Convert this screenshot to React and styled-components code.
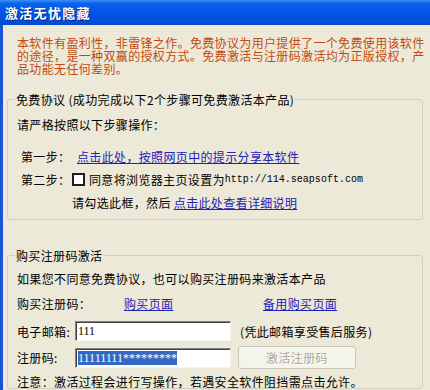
import React from 'react';
import styled, { createGlobalStyle } from 'styled-components';

const GlobalStyle = createGlobalStyle`
  body {
    margin: 0;
    background: #ECE9D8;
  }
`;

const Window = styled.div`
  width: 430px;
  height: 390px;
  overflow: hidden;
  display: flex;
  flex-direction: column;
  background: #ECE9D8;
  font-family: "Noto Sans CJK SC", "Noto Sans", sans-serif;
  font-size: 12px;
  line-height: 13px;
  letter-spacing: 0.35px;
  color: #000;
`;

const TitleBar = styled.div`
  height: 25px;
  flex: none;
  display: flex;
  align-items: center;
  padding-left: 5px;
  background: linear-gradient(to bottom, #3C8EF9 0%, #0B62EA 14%, #0055E5 50%, #0050DC 85%, #0747C6 100%);
  color: #fff;
  font-weight: bold;
  font-size: 13px;
  letter-spacing: 1.3px;
  text-shadow: 1px 1px 0 #0A2A8A;
`;

const Body = styled.div`
  flex: 1;
  display: flex;
  flex-direction: column;
  border-left: 3px solid #1B52D6;
  padding: 11px 7px 0 4px;
`;

const Notice = styled.p`
  margin: 0 0 18px 10px;
  color: #C24A10;
  white-space: nowrap;
`;

const Group = styled.fieldset`
  margin: ${p => p.$top || 0}px 0 0;
  padding: 0 10px ${p => p.$bottom || 0}px 9px;
  border: 1px solid #D0D0BF;
  border-radius: 3px;
  min-width: 0;
`;

const Legend = styled.legend`
  padding: 0 1px;
  margin-left: -2px;
  line-height: 13px;
`;

const Line = styled.div`
  display: flex;
  align-items: center;
  white-space: nowrap;
  margin-top: ${p => p.$mt || 0}px;
  padding-left: ${p => p.$indent || 0}px;
  height: ${p => p.$h || 13}px;
`;

const Label = styled.span`
  width: ${p => p.$w}px;
  flex: none;
`;

const Link = styled.a`
  color: #2222B4;
  text-decoration: underline;
  cursor: pointer;
  margin-left: ${p => p.$ml || 0}px;
`;

const Url = styled.span`
  font-family: "Liberation Mono", monospace;
  font-size: 10px;
  letter-spacing: 0;
`;

const CheckBox = styled.span`
  width: 13px;
  height: 13px;
  box-sizing: border-box;
  flex: none;
  border: 2px solid #1E1E1E;
  background: #fff;
  margin-right: 4px;
`;

const TextBox = styled.div`
  width: 156px;
  height: 20px;
  box-sizing: border-box;
  flex: none;
  display: flex;
  align-items: center;
  padding-left: 2px;
  background: #fff;
  border: 1px solid;
  border-color: #808080 #F4F4F0 #F4F4F0 #808080;
  box-shadow: inset 1px 1px 0 #404040;
  font-family: "Liberation Serif", serif;
  font-size: 12px;
  letter-spacing: 0;
`;

const Selected = styled.span`
  background: #316AC5;
  color: #fff;
  line-height: 14px;
`;

const Hint = styled.span`
  margin-left: 9px;
`;

const ActionButton = styled.button`
  width: 118px;
  height: 23px;
  margin-left: 7px;
  padding: 0;
  border: 1px solid #C9C7BA;
  border-radius: 3px;
  background: #F5F4EA;
  color: #ACA899;
  font: inherit;
  letter-spacing: 0.35px;
  text-shadow: 1px 1px 0 #fff;
`;

export default function App() {
    return (
        <Window>
            <GlobalStyle />
            <TitleBar>激活无忧隐藏</TitleBar>
            <Body>
                <Notice>
                    本软件有盈利性，非雷锋之作。免费协议为用户提供了一个免费使用该软件<br />
                    的途径，是一种双赢的授权方式。免费激活与注册码激活均为正版授权，产<br />
                    品功能无任何差别。
                </Notice>

                <Group $bottom={10}>
                    <Legend>免费协议 (成功完成以下2个步骤可免费激活本产品)</Legend>
                    <Line $mt={12}>请严格按照以下步骤操作：</Line>
                    <Line $mt={19} $indent={4}>
                        <Label $w={56}>第一步：</Label>
                        <Link>点击此处，按照网页中的提示分享本软件</Link>
                    </Line>
                    <Line $mt={10} $indent={4}>
                        <Label $w={51}>第二步：</Label>
                        <CheckBox />
                        同意将浏览器主页设置为<Url>http://114.seapsoft.com</Url>
                    </Line>
                    <Line $mt={10} $indent={55}>
                        请勾选此框，然后<Link $ml={3}>点击此处查看详细说明</Link>
                    </Line>
                </Group>

                <Group $top={29}>
                    <Legend>购买注册码激活</Legend>
                    <Line $mt={10}>如果您不同意免费协议，也可以购买注册码来激活本产品</Line>
                    <Line $mt={12}>
                        <Label $w={107}>购买注册码：</Label>
                        <Label $w={139}><Link>购买页面</Link></Label>
                        <Link>备用购买页面</Link>
                    </Line>
                    <Line $mt={11} $h={20}>
                        <Label $w={58}>电子邮箱:</Label>
                        <TextBox>111</TextBox>
                        <Hint>(凭此邮箱享受售后服务)</Hint>
                    </Line>
                    <Line $mt={5} $h={23}>
                        <Label $w={58}>注册码:</Label>
                        <TextBox><Selected>11111111*********</Selected></TextBox>
                        <ActionButton disabled>激活注册码</ActionButton>
                    </Line>
                    <Line $mt={6}>注意：激活过程会进行写操作，若遇安全软件阻挡需点击允许。</Line>
                </Group>
            </Body>
        </Window>
    );
}
